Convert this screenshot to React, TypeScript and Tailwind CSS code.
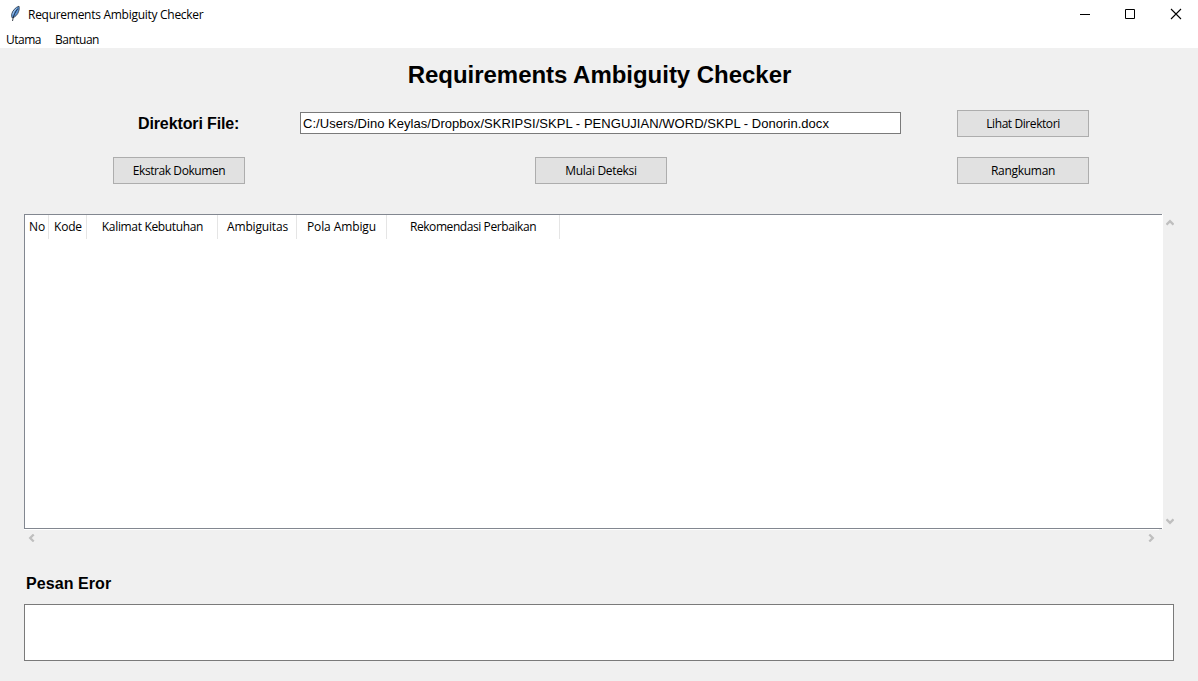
import type { ReactNode } from "react";

const ui = "font-['Open_Sans','Noto_Sans',sans-serif]";
const arial = "font-['Liberation_Sans',Arial,sans-serif]";

function Feather() {
  return (
    <svg width="16" height="18" viewBox="0 0 16 18" className="block">
      <path d="M12 1.200C8.500 2.200 5.300 5.800 4.600 9.600c-.2 1.600.2 2.800.7 3.300 3-.8 5.400-3.400 6.300-6.300.7-2 .8-3.800.4-5.400Z" fill="#5b94d6" stroke="#26323f" strokeWidth=".8" />
      <path d="M10.800 3.600C8.500 6.500 6.400 10 5.500 16" fill="none" stroke="#101722" strokeWidth=".8" />
      <path d="M9.600 3.500C7.500 5.100 6.200 7.200 5.800 9.500" fill="none" stroke="#b4d1f2" strokeWidth=".9" />
    </svg>
  );
}

function Button({ tracking, children }: { tracking: string; children: ReactNode }) {
  return (
    <button className={`flex h-[27px] w-[132px] items-center justify-center whitespace-nowrap border border-[#adadad] bg-[#e1e1e1] text-[12px] leading-4 ${tracking} ${ui}`}>
      {children}
    </button>
  );
}

function Chevron({ className }: { className: string }) {
  return (
    <svg width="8" height="8" viewBox="0 0 8 8" className={`block shrink-0 ${className}`}>
      <path d="M.5 5.700 4 2.200l3.500 3.500" fill="none" stroke="#bfbfbf" strokeWidth="2.300" />
    </svg>
  );
}

const columns = [
  { label: "No", style: "w-6 pl-px tracking-[-0.1px]" },
  { label: "Kode", style: "w-[38px] pl-px tracking-[-0.2px]" },
  { label: "Kalimat Kebutuhan", style: "w-[131px] pl-px tracking-[-0.34px]" },
  { label: "Ambiguitas", style: "w-[79px] pl-px tracking-[-0.18px]" },
  { label: "Pola Ambigu", style: "w-[90px] tracking-[-0.1px]" },
  { label: "Rekomendasi Perbaikan", style: "w-[173px] tracking-[-0.42px]" },
];

export default function App() {
  return (
    <div className={`flex h-[681px] w-[1198px] flex-col overflow-hidden bg-[#f0f0f0] text-black ${ui}`}>
      <header className="flex h-[30px] shrink-0 items-start bg-white">
        <div className="ml-[7px] mt-[5px]"><Feather /></div>
        <span className="ml-[5px] mt-[7px] whitespace-nowrap text-[12px] leading-4 tracking-[-0.28px]">Requrements Ambiguity Checker</span>
        <svg width="138" height="29" viewBox="0 0 138 29" className="ml-auto block">
          <path d="M20 14.500h10M65.500 9.500h9v9h-9z" fill="none" stroke="#000" />
          <path d="m111 9 10 10m0-10-10 10" fill="none" stroke="#000" strokeWidth="1.100" />
        </svg>
      </header>
      <nav className="flex h-[18px] shrink-0 gap-[14px] bg-white pl-[6px] text-[12px] leading-4 tracking-[-0.5px]">
        <span className="mt-[2px]">Utama</span>
        <span className="mt-[2px]">Bantuan</span>
      </nav>
      <main className="flex flex-col">
        <h1 className={`mt-3 h-[30px] pl-px text-center text-[24px] font-bold leading-[30px] tracking-[-0.03px] ${arial}`}>Requirements Ambiguity Checker</h1>
        <div className="mt-5 flex h-[27px] items-start">
          <label className={`ml-[138px] mt-1 w-[162px] text-[16px] font-bold leading-5 tracking-[-0.12px] ${arial}`}>Direktori File:</label>
          <div className={`mr-14 mt-[2px] flex h-[22px] w-[601px] items-center whitespace-nowrap border border-[#7a7a7a] bg-white pl-[2px] pt-px text-[13px] tracking-[0.04px] ${arial}`}>
            C:/Users/Dino Keylas/Dropbox/SKRIPSI/SKPL - PENGUJIAN/WORD/SKPL - Donorin.docx
          </div>
          <Button tracking="tracking-[-0.42px]">Lihat Direktori</Button>
        </div>
        <div className="ml-[113px] mt-5 flex w-[976px] justify-between">
          <Button tracking="tracking-[-0.42px]">Ekstrak Dokumen</Button>
          <Button tracking="tracking-[-0.32px]">Mulai Deteksi</Button>
          <Button tracking="tracking-[-0.28px]">Rangkuman</Button>
        </div>
        <section className="ml-6 mt-[30px] flex h-[315px]">
          <div className="w-[1138px] border-y border-l border-[#828790] bg-white">
            <div className="flex h-6">
              {columns.map((column) => (
                <div key={column.label} className={`flex shrink-0 items-center justify-center whitespace-nowrap border-r border-[#e5e5e5] text-[12px] leading-4 ${column.style}`}>
                  {column.label}
                </div>
              ))}
            </div>
          </div>
          <div className="flex w-4 flex-col items-start justify-between border-l border-white pb-1 pl-[3px] pt-[5px]">
            <Chevron className="" />
            <Chevron className="rotate-180" />
          </div>
        </section>
        <div className="ml-6 flex h-[17px] w-[1135px] items-start justify-between border-t border-white px-1 pt-1">
          <Chevron className="-rotate-90" />
          <Chevron className="rotate-90" />
        </div>
        <h2 className={`ml-[26px] mt-7 h-5 text-[16px] font-bold leading-5 tracking-[0.08px] ${arial}`}>Pesan Eror</h2>
        <div className="ml-6 mt-[10px] h-[57px] w-[1150px] border border-[#7a7a7a] bg-white" />
      </main>
    </div>
  );
}
